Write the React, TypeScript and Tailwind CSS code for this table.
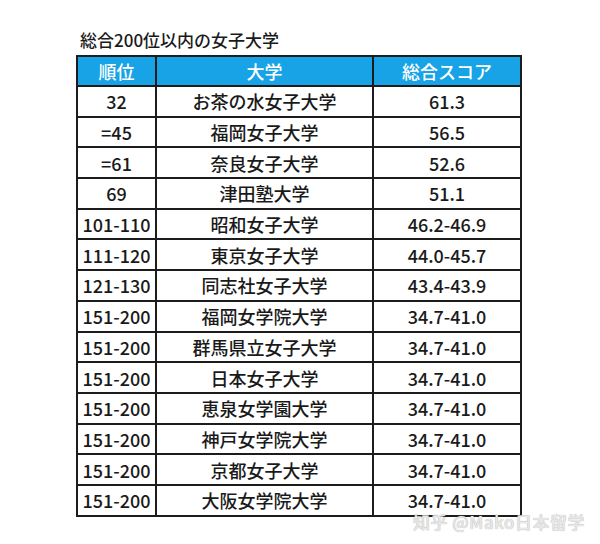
const rows = [
  ["32", "お茶の水女子大学", "61.3"],
  ["=45", "福岡女子大学", "56.5"],
  ["=61", "奈良女子大学", "52.6"],
  ["69", "津田塾大学", "51.1"],
  ["101-110", "昭和女子大学", "46.2-46.9"],
  ["111-120", "東京女子大学", "44.0-45.7"],
  ["121-130", "同志社女子大学", "43.4-43.9"],
  ["151-200", "福岡女学院大学", "34.7-41.0"],
  ["151-200", "群馬県立女子大学", "34.7-41.0"],
  ["151-200", "日本女子大学", "34.7-41.0"],
  ["151-200", "恵泉女学園大学", "34.7-41.0"],
  ["151-200", "神戸女学院大学", "34.7-41.0"],
  ["151-200", "京都女子大学", "34.7-41.0"],
  ["151-200", "大阪女学院大学", "34.7-41.0"],
];

export default function App() {
  return (
    <div
      className="relative w-[600px] h-[544px] bg-white text-[#1a1a1a]"
      style={{ fontFamily: '"Noto Sans CJK JP", "Noto Sans", sans-serif' }}
    >
      <div className="pl-[80px] pt-[29px] h-[55px] text-[17px] font-medium leading-[22px]">
        総合200位以内の女子大学
      </div>
      <table className="ml-[76px] border-collapse border-2 border-[#1c1c1c] text-[18px] font-medium">
        <thead>
          <tr className="h-[30px] bg-[#17a3e6] text-white">
            <th className="w-[79px] border-2 border-[#1c1c1c] font-medium p-0 leading-none">順位</th>
            <th className="w-[217px] border-2 border-[#1c1c1c] font-medium p-0 leading-none">大学</th>
            <th className="w-[148px] border-2 border-[#1c1c1c] font-medium p-0 leading-none">総合スコア</th>
          </tr>
        </thead>
        <tbody>
          {rows.map((r, i) => (
            <tr key={i} className="h-[30.7px]">
              <td className="border-2 border-[#1c1c1c] text-center p-0 leading-none">{r[0]}</td>
              <td className="border-2 border-[#1c1c1c] text-center p-0 leading-none">{r[1]}</td>
              <td className="border-2 border-[#1c1c1c] text-center p-0 leading-none">{r[2]}</td>
            </tr>
          ))}
        </tbody>
      </table>
      <div
        className="absolute left-[413px] top-[509px] text-[17px] font-medium text-[#e8e8e8] tracking-[0.5px]"
        style={{ textShadow: "0 0 1px #9a9a9a" }}
      >
        知乎 @Mako日本留学
      </div>
    </div>
  );
}
